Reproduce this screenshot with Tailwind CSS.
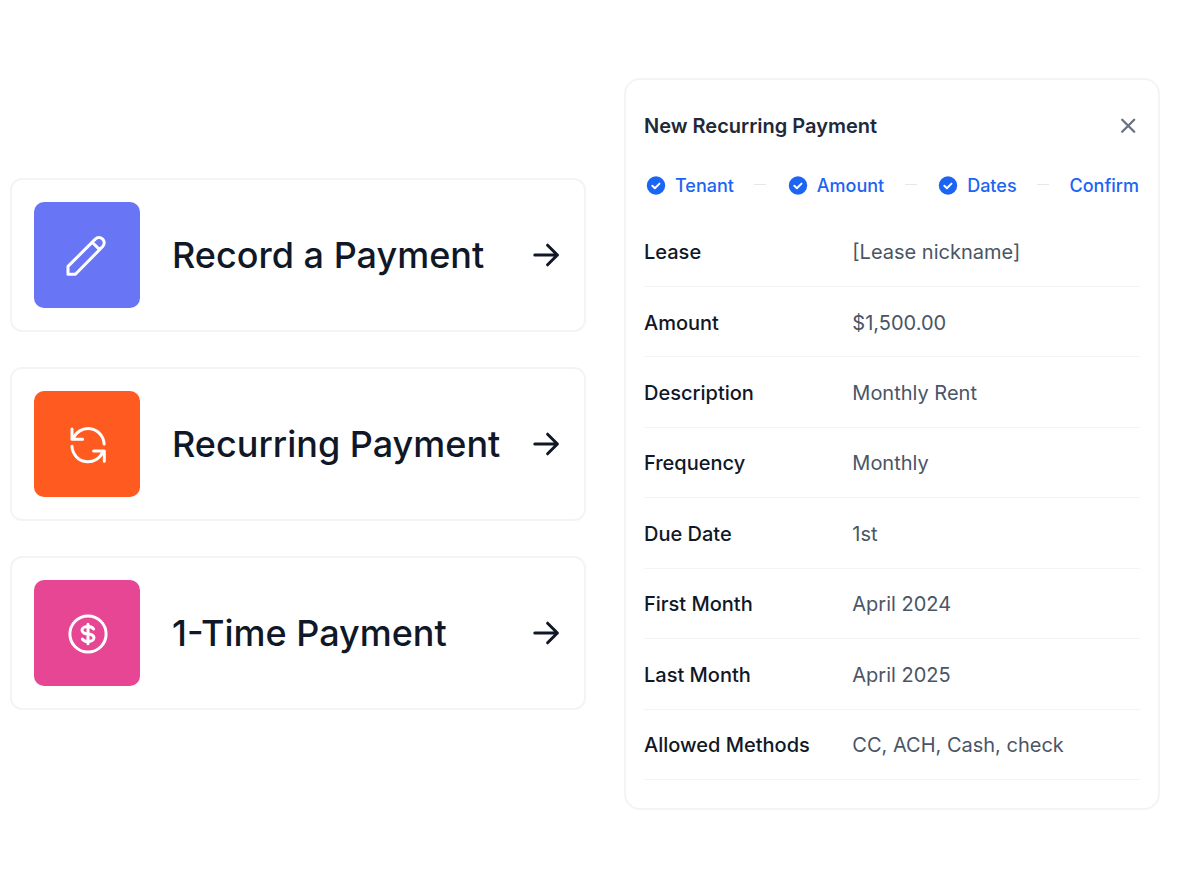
<!doctype html>
<html lang="en">

<head>
    <meta charset="utf-8">
    <meta name="viewport" content="width=device-width, initial-scale=1">
    <title>Payments</title>
    <script src="https://cdn.jsdelivr.net/npm/@tailwindcss/browser@4"></script>
</head>

<body class="bg-white font-['Inter',sans-serif] text-gray-900">
    <main class="grid min-h-screen grid-cols-[576fr_536fr] items-center gap-[38px] pt-[3px] pr-[21px] pl-[10px]">

        <!-- payment types -->
        <nav class="flex flex-col gap-[35px]">
            <a href="#record" class="flex items-center rounded-xl border-2 border-[#f4f4f5] p-[22px]">
                <span class="flex size-[106px] items-center justify-center rounded-[10px] bg-[#6875f5]">
                    <svg class="size-[54px] text-white" viewBox="0 0 54 54" fill="none" stroke="currentColor"
                        stroke-width="3" stroke-linecap="round" stroke-linejoin="round">
                        <path d="M32.2 14.2L39.6 21.6M35.3 11.1a5.2 5.2 0 0 1 7.4 7.4L15.4 46.2H8V38.4z"></path>
                    </svg>
                </span>
                <span class="ml-8 text-4xl font-medium">Record a Payment</span>
                <svg class="mr-0.5 ml-auto size-7 shrink-0" viewBox="0 0 28 28" fill="none" stroke="currentColor"
                    stroke-width="3" stroke-linecap="round" stroke-linejoin="round">
                    <path d="M2.8 14h22.6M15.6 4.2l9.8 9.8-9.8 9.8"></path>
                </svg>
            </a>
            <a href="#recurring" class="flex items-center rounded-xl border-2 border-[#f4f4f5] p-[22px]">
                <span class="flex size-[106px] items-center justify-center rounded-[10px] bg-[#ff5a1f]">
                    <svg class="size-[54px] text-white" viewBox="0 0 54 54" fill="none" stroke="currentColor"
                        stroke-width="3" stroke-linecap="round" stroke-linejoin="round">
                        <path d="M12 12v10.3H22.6M13 22.3a16 16 0 0 1 31.1 4.7M44.3 44.3V34H33.6M43.1 34a16 16 0 0 1-31.1-4.7"></path>
                    </svg>
                </span>
                <span class="ml-8 text-4xl font-medium">Recurring Payment</span>
                <svg class="mr-0.5 ml-auto size-7 shrink-0" viewBox="0 0 28 28" fill="none" stroke="currentColor"
                    stroke-width="3" stroke-linecap="round" stroke-linejoin="round">
                    <path d="M2.8 14h22.6M15.6 4.2l9.8 9.8-9.8 9.8"></path>
                </svg>
            </a>
            <a href="#one-time" class="flex items-center rounded-xl border-2 border-[#f4f4f5] p-[22px]">
                <span class="flex size-[106px] items-center justify-center rounded-[10px] bg-[#e74694]">
                    <svg class="size-[54px] text-white" viewBox="0 0 54 54" fill="none" stroke="currentColor"
                        stroke-width="3" stroke-linecap="round" stroke-linejoin="round">
                        <circle cx="28" cy="28" r="18.1"></circle>
                        <path d="M28 18.2v19.6M33.6 23C32.6 21.4 30.4 20.5 28 20.5c-3.3 0-6 1.6-6 3.7s2.7 3.8 6 3.8 6 1.7 6 3.8-2.7 3.7-6 3.7c-2.4 0-4.6-.9-5.6-2.4"></path>
                    </svg>
                </span>
                <span class="ml-8 text-4xl font-medium">1-Time Payment</span>
                <svg class="mr-0.5 ml-auto size-7 shrink-0" viewBox="0 0 28 28" fill="none" stroke="currentColor"
                    stroke-width="3" stroke-linecap="round" stroke-linejoin="round">
                    <path d="M2.8 14h22.6M15.6 4.2l9.8 9.8-9.8 9.8"></path>
                </svg>
            </a>
        </nav>

        <!-- recurring payment summary -->
        <section class="rounded-2xl border-2 border-[#f4f4f5] px-[18px] pt-8 pb-7">
            <div class="flex items-center justify-between">
                <h2 class="text-xl leading-7 font-semibold text-gray-800">New Recurring Payment</h2>
                <button type="button" aria-label="Close" class="text-gray-500">
                    <svg class="size-6" viewBox="0 0 24 24" fill="none" stroke="currentColor" stroke-width="2.3"
                        stroke-linecap="round">
                        <path d="M6.2 5.7l12 12M18.2 5.7l-12 12"></path>
                    </svg>
                </button>
            </div>

            <ol class="mt-8 flex items-center justify-between px-px text-lg leading-7 font-medium text-[#1c64f2]">
                <li class="flex items-center gap-2">
                    <svg class="size-[22px]" viewBox="0 0 22 22" fill="none">
                        <circle cx="11" cy="10.5" r="9.2" fill="currentColor"></circle>
                        <path d="M7.3 10.8l2.6 2.4 4.6-4.6" stroke="white" stroke-width="2" stroke-linecap="round" stroke-linejoin="round"></path>
                    </svg>
                    Tenant
                </li>
                <li class="mb-1 h-px w-3 bg-gray-200" aria-hidden="true"></li>
                <li class="flex items-center gap-2">
                    <svg class="size-[22px]" viewBox="0 0 22 22" fill="none">
                        <circle cx="11" cy="10.5" r="9.2" fill="currentColor"></circle>
                        <path d="M7.3 10.8l2.6 2.4 4.6-4.6" stroke="white" stroke-width="2" stroke-linecap="round" stroke-linejoin="round"></path>
                    </svg>
                    Amount
                </li>
                <li class="mb-1 h-px w-3 bg-gray-200" aria-hidden="true"></li>
                <li class="flex items-center gap-2">
                    <svg class="size-[22px]" viewBox="0 0 22 22" fill="none">
                        <circle cx="11" cy="10.5" r="9.2" fill="currentColor"></circle>
                        <path d="M7.3 10.8l2.6 2.4 4.6-4.6" stroke="white" stroke-width="2" stroke-linecap="round" stroke-linejoin="round"></path>
                    </svg>
                    Dates
                </li>
                <li class="mb-1 h-px w-3 bg-gray-200" aria-hidden="true"></li>
                <li>Confirm</li>
            </ol>

            <table class="mt-[17px] h-[563px] w-full text-left text-xl">
                <tbody>
                    <tr class="border-b border-gray-100">
                        <th scope="row" class="w-[42%] pt-0.5 font-medium">Lease</th>
                        <td class="pt-0.5 text-gray-600">[Lease nickname]</td>
                    </tr>
                    <tr class="border-b border-gray-100">
                        <th scope="row" class="pt-0.5 font-medium">Amount</th>
                        <td class="pt-0.5 text-gray-600">$1,500.00</td>
                    </tr>
                    <tr class="border-b border-gray-100">
                        <th scope="row" class="pt-0.5 font-medium">Description</th>
                        <td class="pt-0.5 text-gray-600">Monthly Rent</td>
                    </tr>
                    <tr class="border-b border-gray-100">
                        <th scope="row" class="pt-0.5 font-medium">Frequency</th>
                        <td class="pt-0.5 text-gray-600">Monthly</td>
                    </tr>
                    <tr class="border-b border-gray-100">
                        <th scope="row" class="pt-0.5 font-medium">Due Date</th>
                        <td class="pt-0.5 text-gray-600">1st</td>
                    </tr>
                    <tr class="border-b border-gray-100">
                        <th scope="row" class="pt-0.5 font-medium">First Month</th>
                        <td class="pt-0.5 text-gray-600">April 2024</td>
                    </tr>
                    <tr class="border-b border-gray-100">
                        <th scope="row" class="pt-0.5 font-medium">Last Month</th>
                        <td class="pt-0.5 text-gray-600">April 2025</td>
                    </tr>
                    <tr class="border-b border-gray-100">
                        <th scope="row" class="pt-0.5 font-medium">Allowed Methods</th>
                        <td class="pt-0.5 text-gray-600">CC, ACH, Cash, check</td>
                    </tr>
                </tbody>
            </table>
        </section>
    </main>
</body>

</html>
